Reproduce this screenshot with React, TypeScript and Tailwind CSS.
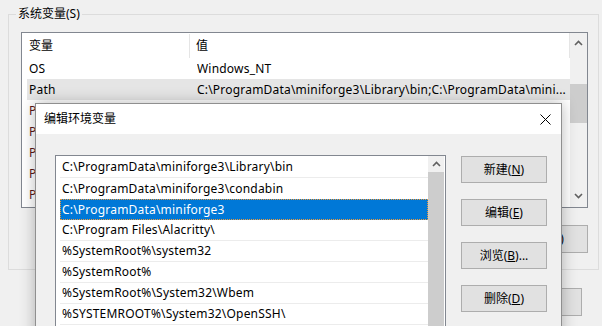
import React from "react";

const FONT = '"Segoe UI", "Noto Sans", "Noto Sans CJK SC", sans-serif';

function ChevronUp() {
  return (
    <svg width="9" height="6" viewBox="0 0 9 6">
      <polyline points="1,5 4.5,1.5 8,5" fill="none" stroke="#606060" strokeWidth="1.6" />
    </svg>
  );
}
function ChevronDown() {
  return (
    <svg width="9" height="6" viewBox="0 0 9 6">
      <polyline points="1,1 4.5,4.5 8,1" fill="none" stroke="#606060" strokeWidth="1.6" />
    </svg>
  );
}

function WinButton({ children, className = "" }: { children: React.ReactNode; className?: string }) {
  return (
    <div
      className={`flex h-[27px] w-[86px] items-center justify-center border border-[#adadad] bg-[#e1e1e1] text-[12px] text-black ${className}`}
    >
      {children}
    </div>
  );
}

const bgRows = [
  { name: "OS", value: "Windows_NT" },
  { name: "Path", value: "C:\\ProgramData\\miniforge3\\Library\\bin;C:\\ProgramData\\mini...", hl: true },
  { name: "PATHEXT", value: "" },
  { name: "PROCESSOR_ARCHITECTURE", value: "" },
  { name: "PROCESSOR_IDENTIFIER", value: "" },
  { name: "PROCESSOR_LEVEL", value: "" },
  { name: "PROCESSOR_REVISION", value: "" },
];

const paths = [
  "C:\\ProgramData\\miniforge3\\Library\\bin",
  "C:\\ProgramData\\miniforge3\\condabin",
  "C:\\ProgramData\\miniforge3",
  "C:\\Program Files\\Alacritty\\",
  "%SystemRoot%\\system32",
  "%SystemRoot%",
  "%SystemRoot%\\System32\\Wbem",
  "%SYSTEMROOT%\\System32\\OpenSSH\\",
];

export default function App() {
  return (
    <div
      className="relative h-[326px] w-[602px] overflow-hidden bg-[#f0f0f0] text-[12px] text-black"
      style={{ fontFamily: FONT }}
    >
      {/* Background window: system variables group */}
      <div className="pl-[8px] pt-[14px]">
        <div className="relative h-[256px] w-[591px] border border-[#dcdcdc] pl-[12px] pt-[17px]">
          <div className="absolute left-[7px] top-[-9px] bg-[#f0f0f0] px-[2px] leading-[16px]">系统变量(S)</div>
          <div className="flex h-[176px] w-[567px] border border-[#828790] bg-white">
            <div className="flex-1 overflow-hidden">
              <div className="flex h-[25px] items-center">
                <div className="w-[168px] border-r border-[#e5e5e5] pl-[7px] leading-[24px]">变量</div>
                <div className="flex-1 pl-[6px]">值</div>
                <div className="h-[25px] w-[1px] bg-[#e5e5e5]" />
              </div>
              {bgRows.map((r) => (
                <div
                  key={r.name}
                  className={`ml-[5px] flex h-[21px] items-center whitespace-nowrap tracking-[0.2px] ${r.hl ? "bg-[#e5e5e5]" : ""}`}
                >
                  <div className={`w-[170px] overflow-hidden pl-[2px] ${r.name.startsWith("P") && r.name !== "Path" ? "text-[#5a1818]" : ""}`}>
                    {r.name}
                  </div>
                  <div className="flex-1 overflow-hidden">{r.value}</div>
                </div>
              ))}
            </div>
            <div className="flex w-[17px] flex-col bg-[#f0f0f0]">
              <div className="flex h-[20px] items-center justify-center">
                <ChevronUp />
              </div>
              <div className="h-[31px]" />
              <div className="h-[39px] bg-[#cdcdcd]" />
              <div className="flex-1" />
              <div className="flex h-[20px] items-center justify-center pb-[2px]">
                <ChevronDown />
              </div>
            </div>
          </div>
          <div className="mt-[17px] flex w-[567px] justify-end gap-[10px]">
            <div className="flex h-[28px] w-[86px] items-center justify-center border border-[#adadad] bg-[#e1e1e1]">新建(W)...</div>
            <div className="flex h-[28px] w-[86px] items-center justify-center border border-[#adadad] bg-[#e1e1e1]">编辑(I)...</div>
            <div className="flex h-[28px] w-[86px] items-center justify-center border border-[#adadad] bg-[#e1e1e1]">删除(L)</div>
          </div>
        </div>
      </div>
      <div className="mt-[18px] flex justify-end gap-[10px] pr-[20px]">
        <div className="flex h-[28px] w-[86px] items-center justify-center border border-[#adadad] bg-[#e1e1e1]">确定</div>
        <div className="flex h-[28px] w-[86px] items-center justify-center border border-[#adadad] bg-[#e1e1e1]">取消</div>
      </div>

      {/* Overlaid dialog window */}
      <div className="absolute left-[35px] top-[103px] h-[260px] w-[527px] border border-[#8f8f8f] bg-[#f0f0f0] shadow-[0_0_14px_rgba(0,0,0,0.28)]">
        <div className="flex h-[30px] items-center justify-between bg-white pl-[8px] pr-[10px]">
          <span>编辑环境变量</span>
          <svg width="11" height="11" viewBox="0 0 11 11">
            <path d="M0.5 0.5 L10.5 10.5 M10.5 0.5 L0.5 10.5" stroke="#000" strokeWidth="1" />
          </svg>
        </div>
        <div className="flex gap-[15px] pl-[19px] pt-[21px]">
          <div className="flex h-[200px] w-[391px] border border-[#828790] bg-white">
            <div className="flex-1 overflow-hidden pl-[4px] pt-[1px] tracking-[0.2px]">
              {paths.map((p, i) =>
                i === 2 ? (
                  <div
                    key={p}
                    className="flex h-[21px] items-center whitespace-nowrap border border-dotted border-[#f09a3a] bg-[#0078d7] pl-[1px] text-white"
                  >
                    {p}
                  </div>
                ) : (
                  <div
                    key={p}
                    className={`flex h-[21px] items-center whitespace-nowrap pl-[2px] ${i === 1 ? "" : "border-b border-[#ececec]"}`}
                  >
                    {p}
                  </div>
                )
              )}
            </div>
            <div className="flex w-[16px] flex-col">
              <div className="flex h-[16px] items-center justify-center bg-[#f0f0f0]">
                <ChevronUp />
              </div>
              <div className="flex-1 bg-[#cdcdcd]" />
            </div>
            <div className="w-[1px]" />
          </div>
          <div className="mt-[1px] flex flex-col gap-[16px]">
            <WinButton>
              新建(<span className="underline">N</span>)
            </WinButton>
            <WinButton>
              编辑(<span className="underline">E</span>)
            </WinButton>
            <WinButton>
              浏览(<span className="underline">B</span>)...
            </WinButton>
            <WinButton>
              删除(<span className="underline">D</span>)
            </WinButton>
          </div>
        </div>
      </div>
    </div>
  );
}
